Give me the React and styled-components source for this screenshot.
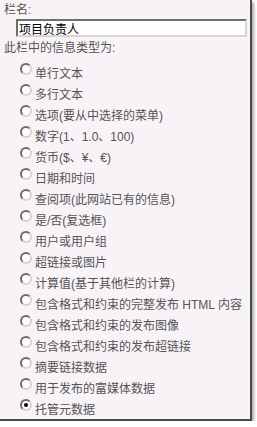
import React from "react";
import styled, { createGlobalStyle } from "styled-components";

const GlobalStyle = createGlobalStyle`
  body {
    margin: 0;
    background: #ffffff;
    font-family: "Liberation Sans", "Noto Sans CJK SC", sans-serif;
  }
`;

const Panel = styled.div`
  box-sizing: border-box;
  width: 252px;
  height: 421px;
  padding: 3px 0 0 4px;
  background: #f7f3f7;
  border-right: 2px solid #4a4a4a;
  border-bottom: 2px solid #4a4a4a;
  box-shadow: 2px 2px 3px rgba(0, 0, 0, 0.35);
  color: #555555;
  font-size: 12px;
  line-height: 14px;
`;

const FieldLabel = styled.div`
  margin-top: ${(p) => p.$top || 0}px;
`;

const TextBox = styled.input`
  box-sizing: border-box;
  display: block;
  width: 231px;
  height: 18px;
  margin: 2px 0 0 12px;
  padding: 0 0 0 1px;
  border: 2px solid;
  border-color: #6e6e6e #d8d4d8 #d8d4d8 #6e6e6e;
  background: #ffffff;
  color: #000000;
  font-family: "Liberation Sans", "Noto Sans CJK SC", sans-serif;
  font-size: 12px;
  line-height: 14px;
  outline: none;
`;

const RadioList = styled.div`
  display: flex;
  flex-direction: column;
  margin-top: 8px;
  padding-left: 16px;
`;

const RadioRow = styled.label`
  display: flex;
  align-items: flex-start;
  height: 21px;
`;

const RadioMark = styled.span`
  box-sizing: border-box;
  position: relative;
  width: 12px;
  height: 12px;
  flex: none;
  border-radius: 50%;
  border: 2px solid;
  border-color: #6a6a6a #d6d2d6 #d6d2d6 #6a6a6a;
  background: #ffffff;

  &::after {
    content: "";
    display: ${(p) => (p.$checked ? "block" : "none")};
    position: absolute;
    left: 2px;
    top: 2px;
    width: 4px;
    height: 4px;
    border-radius: 50%;
    background: #000000;
  }
`;

const RadioText = styled.span`
  margin: 4px 0 0 3px;
  white-space: nowrap;
`;

const types = [
  "单行文本",
  "多行文本",
  "选项(要从中选择的菜单)",
  "数字(1、1.0、100)",
  "货币($、¥、€)",
  "日期和时间",
  "查阅项(此网站已有的信息)",
  "是/否(复选框)",
  "用户或用户组",
  "超链接或图片",
  "计算值(基于其他栏的计算)",
  "包含格式和约束的完整发布 HTML 内容",
  "包含格式和约束的发布图像",
  "包含格式和约束的发布超链接",
  "摘要链接数据",
  "用于发布的富媒体数据",
  "托管元数据",
];

export default function App() {
  const selected = types.length - 1;
  return (
    <>
      <GlobalStyle />
      <Panel>
        <FieldLabel>栏名:</FieldLabel>
        <TextBox defaultValue="项目负责人" />
        <FieldLabel $top={4}>此栏中的信息类型为:</FieldLabel>
        <RadioList>
          {types.map((t, i) => (
            <RadioRow key={t}>
              <RadioMark $checked={i === selected} />
              <RadioText>{t}</RadioText>
            </RadioRow>
          ))}
        </RadioList>
      </Panel>
    </>
  );
}
